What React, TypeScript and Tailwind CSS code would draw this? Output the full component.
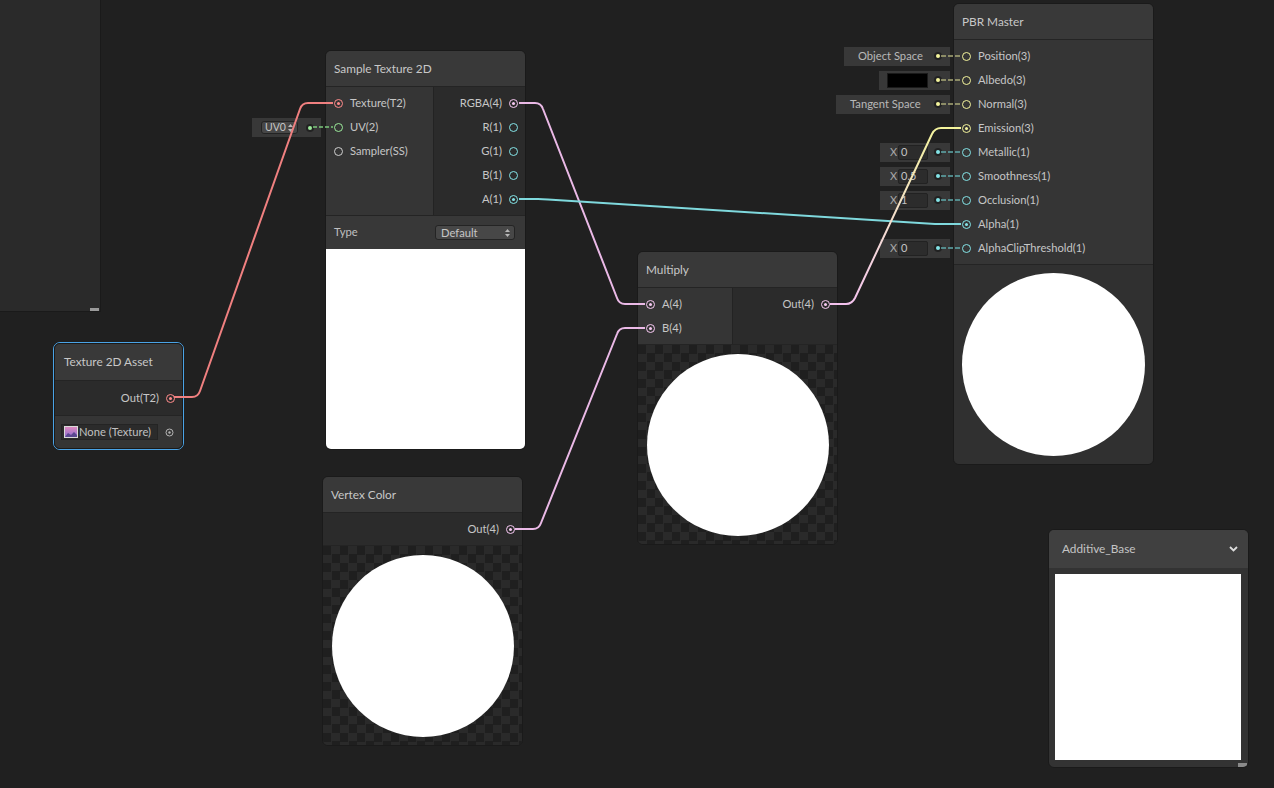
import React from "react";

type PortKind = "tex" | "uv" | "ss" | "v4" | "v1" | "v3";

const PORT: Record<PortKind, { b: string; f: string }> = {
  tex: { b: "border-[#ff8b8b]", f: "bg-[#ff8b8b]" },
  uv: { b: "border-[#9be99a]", f: "bg-[#9be99a]" },
  ss: { b: "border-[#cfcfcf]", f: "bg-[#cfcfcf]" },
  v4: { b: "border-[#f7c8f2]", f: "bg-[#f7c8f2]" },
  v1: { b: "border-[#84e4e7]", f: "bg-[#84e4e7]" },
  v3: { b: "border-[#f4f49c]", f: "bg-[#f4f49c]" },
};

function Port({ kind, filled }: { kind: PortKind; filled?: boolean }) {
  const p = PORT[kind];
  return (
    <span
      className={`flex h-[9px] w-[9px] shrink-0 items-center justify-center rounded-full border-[1.5px] ${p.b}`}
    >
      {filled && <span className={`h-[3px] w-[3px] rounded-full ${p.f}`} />}
    </span>
  );
}

function InRow({ kind, label, filled }: { kind: PortKind; label: string; filled?: boolean }) {
  return (
    <div className="flex h-[24px] items-center gap-[7px] pl-[8px]">
      <Port kind={kind} filled={filled} />
      <span className="text-[11.2px] text-[#c6c6c6]">{label}</span>
    </div>
  );
}

function OutRow({ kind, label, filled }: { kind: PortKind; label: string; filled?: boolean }) {
  return (
    <div className="flex h-[24px] items-center justify-end gap-[7px] pr-[7px]">
      <span className="text-[11.2px] text-[#c6c6c6]">{label}</span>
      <Port kind={kind} filled={filled} />
    </div>
  );
}

function Header({ title }: { title: string }) {
  return (
    <div className="flex h-[36px] shrink-0 items-center border-b border-[#242424] bg-[#393939] px-[8px] text-[11.8px] text-[#c8c8c8]">
      {title}
    </div>
  );
}

function CheckerPreview() {
  return (
    <div className="flex h-[200px] shrink-0 items-center justify-center border-t border-[#242424] bg-[repeating-conic-gradient(#2a2a2a_0_25%,#1f1f1f_0_50%)] bg-[length:17px_17px]">
      <div className="h-[182px] w-[182px] rounded-full bg-white" />
    </div>
  );
}

function UpDown() {
  return (
    <svg width="5" height="8" viewBox="0 0 5 8" className="shrink-0">
      <polygon points="2.5,0 5,3 0,3" fill="#b8b8b8" />
      <polygon points="0,5 5,5 2.5,8" fill="#b8b8b8" />
    </svg>
  );
}

function FieldDot({ color }: { color: string }) {
  return (
    <span className="flex h-[8px] w-[8px] shrink-0 items-center justify-center rounded-full bg-[#222222]">
      <span className={`h-[4px] w-[4px] rounded-full ${color}`} />
    </span>
  );
}

function XField({ value }: { value: string }) {
  return (
    <div className="flex h-[19px] w-[70px] items-center bg-[#383838] pl-[10px] pr-[8px]">
      <span className="w-[8px] text-[11px] text-[#a8a8a8]">X</span>
      <span className="flex h-[15px] w-[30px] items-center rounded-[2px] border border-[#222222] bg-[#2c2c2c] pl-[2px] text-[11px] text-[#c4c4c4]">
        {value}
      </span>
      <span className="flex-1" />
      <FieldDot color="bg-[#84e4e7]" />
    </div>
  );
}

function TextField({ label, w }: { label: string; w: string }) {
  return (
    <div className={`flex h-[19px] items-center justify-between bg-[#383838] pl-[14px] pr-[8px] ${w}`}>
      <span className="text-[11.2px] text-[#b8b8b8]">{label}</span>
      <FieldDot color="bg-[#f4f49c]" />
    </div>
  );
}

function TexIcon() {
  return (
    <svg width="14" height="12" viewBox="0 0 14 12" className="shrink-0">
      <defs>
        <linearGradient id="tg" x1="0" y1="0" x2="0" y2="1">
          <stop offset="0" stopColor="#e08bbf" />
          <stop offset="1" stopColor="#8a6bd0" />
        </linearGradient>
      </defs>
      <rect x="0.5" y="0.5" width="13" height="11" fill="url(#tg)" stroke="#d9d9d9" strokeWidth="1" />
      <polygon points="1,11 4,7 7,9 10,6 13,9 13,11" fill="#5a4790" />
    </svg>
  );
}

export default function App() {
  return (
    <div className="relative h-[788px] w-[1274px] overflow-hidden bg-[#202020] font-['Lato','Noto_Sans',sans-serif]">
      {/* Left docked panel */}
      <div className="absolute left-0 top-0 h-[312px] w-[101px] border-b border-r border-[#1a1a1a] bg-[#2a2a2a]">
        <div className="absolute bottom-[0px] right-[1px] h-[3px] w-[9px] bg-[#9a9a9a]" />
      </div>

      {/* UV0 default field */}
      <div className="absolute left-[252px] top-[118px] flex h-[19px] w-[69px] items-center bg-[#383838] pl-[9px] pr-[7px]">
        <span className="flex h-[13px] w-[37px] items-center justify-between rounded-[3px] border border-[#232323] bg-[#474747] pl-[3px] pr-[4px] text-[10.5px] leading-none text-[#c6c6c6]">
          UV0
          <UpDown />
        </span>
        <span className="flex-1" />
        <FieldDot color="bg-[#9be99a]" />
      </div>

      {/* PBR Master default input fields */}
      <div className="absolute left-[780px] top-[44px] flex w-[170px] flex-col items-end">
        <div className="flex h-[24px] items-center">
          <TextField label="Object Space" w="w-[106px]" />
        </div>
        <div className="flex h-[24px] items-center">
          <div className="flex h-[19px] w-[71px] items-center bg-[#383838] pl-[8px] pr-[8px]">
            <span className="h-[15px] w-[41px] border border-[#1a1a1a] bg-black" />
            <span className="flex-1" />
            <FieldDot color="bg-[#f4f49c]" />
          </div>
        </div>
        <div className="flex h-[24px] items-center">
          <TextField label="Tangent Space" w="w-[114px]" />
        </div>
        <div className="h-[24px]" />
        <div className="flex h-[24px] items-center">
          <XField value="0" />
        </div>
        <div className="flex h-[24px] items-center">
          <XField value="0.5" />
        </div>
        <div className="flex h-[24px] items-center">
          <XField value="1" />
        </div>
        <div className="h-[24px]" />
        <div className="flex h-[24px] items-center">
          <XField value="0" />
        </div>
      </div>

      {/* Texture 2D Asset (selected) */}
      <div className="absolute left-[53px] top-[342px] w-[131px] rounded-[7px] border border-[#4aa3e6]">
        <div className="flex flex-col overflow-hidden rounded-[6px] border border-[#1a1a1a] bg-[#2b2b2b]">
          <div className="flex h-[37px] items-center border-b border-[#242424] bg-[#393939] px-[9px] text-[11.8px] text-[#c8c8c8]">
            Texture 2D Asset
          </div>
          <div className="py-[5px]">
            <OutRow kind="tex" label="Out(T2)" filled />
          </div>
          <div className="flex h-[33px] items-center border-t border-[#242424] bg-[#353535] pl-[6px] pr-[8px]">
            <div className="flex h-[16px] w-[97px] items-center gap-[1px] border border-[#242424] bg-[#2b2b2b] pl-[2px] text-[11.2px] text-[#c0c0c0]">
              <TexIcon />
              None (Texture)
            </div>
            <span className="flex-1" />
            <svg width="9" height="9" viewBox="0 0 9 9">
              <circle cx="4.5" cy="4.5" r="3.5" fill="none" stroke="#b4b4b4" strokeWidth="1" />
              <circle cx="4.5" cy="4.5" r="1.2" fill="#b4b4b4" />
            </svg>
          </div>
        </div>
      </div>

      {/* Sample Texture 2D */}
      <div className="absolute left-[325px] top-[50px] flex w-[201px] flex-col overflow-hidden rounded-[6px] border border-[#1a1a1a] bg-[#2b2b2b]">
        <Header title="Sample Texture 2D" />
        <div className="flex">
          <div className="w-[108px] border-r border-[#232323] bg-[#353535] pb-[4px] pt-[4px]">
            <InRow kind="tex" label="Texture(T2)" filled />
            <InRow kind="uv" label="UV(2)" />
            <InRow kind="ss" label="Sampler(SS)" />
          </div>
          <div className="flex-1 pb-[4px] pt-[4px]">
            <OutRow kind="v4" label="RGBA(4)" filled />
            <OutRow kind="v1" label="R(1)" />
            <OutRow kind="v1" label="G(1)" />
            <OutRow kind="v1" label="B(1)" />
            <OutRow kind="v1" label="A(1)" filled />
          </div>
        </div>
        <div className="flex h-[34px] items-center justify-between border-t border-[#242424] bg-[#383838] pl-[8px] pr-[10px]">
          <span className="text-[11.2px] text-[#c0c0c0]">Type</span>
          <span className="flex h-[15px] w-[80px] items-center justify-between rounded-[3px] border border-[#242424] bg-[#474747] pl-[5px] pr-[4px] text-[11.2px] leading-none text-[#c6c6c6]">
            Default
            <UpDown />
          </span>
        </div>
        <div className="h-[200px] bg-white" />
      </div>

      {/* Vertex Color */}
      <div className="absolute left-[322px] top-[476px] flex w-[201px] flex-col overflow-hidden rounded-[6px] border border-[#1a1a1a] bg-[#2b2b2b]">
        <Header title="Vertex Color" />
        <div className="pb-[4px] pt-[4px]">
          <OutRow kind="v4" label="Out(4)" filled />
        </div>
        <CheckerPreview />
      </div>

      {/* Multiply */}
      <div className="absolute left-[637px] top-[251px] flex w-[201px] flex-col overflow-hidden rounded-[6px] border border-[#1a1a1a] bg-[#2b2b2b]">
        <Header title="Multiply" />
        <div className="flex">
          <div className="w-[95px] border-r border-[#232323] bg-[#353535] pb-[4px] pt-[4px]">
            <InRow kind="v4" label="A(4)" filled />
            <InRow kind="v4" label="B(4)" filled />
          </div>
          <div className="flex-1 pb-[4px] pt-[4px]">
            <OutRow kind="v4" label="Out(4)" filled />
          </div>
        </div>
        <CheckerPreview />
      </div>

      {/* PBR Master */}
      <div className="absolute left-[953px] top-[3px] flex w-[201px] flex-col overflow-hidden rounded-[6px] border border-[#1a1a1a] bg-[#2b2b2b]">
        <Header title="PBR Master" />
        <div className="bg-[#353535] pb-[4px] pt-[4px]">
          <InRow kind="v3" label="Position(3)" />
          <InRow kind="v3" label="Albedo(3)" />
          <InRow kind="v3" label="Normal(3)" />
          <InRow kind="v3" label="Emission(3)" filled />
          <InRow kind="v1" label="Metallic(1)" />
          <InRow kind="v1" label="Smoothness(1)" />
          <InRow kind="v1" label="Occlusion(1)" />
          <InRow kind="v1" label="Alpha(1)" filled />
          <InRow kind="v1" label="AlphaClipThreshold(1)" />
        </div>
        <div className="flex h-[200px] items-center justify-center border-t border-[#242424] bg-[#303030]">
          <div className="h-[183px] w-[183px] rounded-full bg-white" />
        </div>
      </div>

      {/* Additive_Base preview window */}
      <div className="absolute left-[1048px] top-[529px] flex h-[239px] w-[201px] flex-col overflow-hidden rounded-[6px] border border-[#1a1a1a] bg-[#333333]">
        <div className="flex h-[38px] shrink-0 items-center justify-between bg-[#404040] pl-[13px] pr-[10px] text-[11.8px] text-[#c4c4c4]">
          Additive_Base
          <svg width="9" height="6" viewBox="0 0 9 6">
            <polyline points="1,1 4.5,4.5 8,1" fill="none" stroke="#dcdcdc" strokeWidth="1.8" />
          </svg>
        </div>
        <div className="flex-1 p-[6px] pb-[6px]">
          <div className="h-[186px] w-[186px] bg-white" />
        </div>
        <div className="absolute bottom-[0px] right-[1px] h-[4px] w-[9px] bg-[#8a8a8a]" />
      </div>

      {/* Wires */}
      <svg className="pointer-events-none absolute left-0 top-0" width="1274" height="788">
        <defs>
          <linearGradient id="emi" gradientUnits="userSpaceOnUse" x1="846" y1="304" x2="941" y2="128">
            <stop offset="0" stopColor="#f4c2ee" />
            <stop offset="0.35" stopColor="#f4d8d8" />
            <stop offset="1" stopColor="#f4f49c" />
          </linearGradient>
        </defs>
        <path d="M 174 397 L 192 397 Q 198 397 200 391 L 300 109 Q 302 103 308 103 L 333 103" fill="none" stroke="#f08080" strokeWidth="2" />
        <path d="M 519 103 L 535 103 Q 541 103 543 109 L 617 298 Q 619 304 625 304 L 645 304" fill="none" stroke="#eab9e6" strokeWidth="2" />
        <path d="M 515 529 L 533 529 Q 539 529 541 523 L 617 334 Q 619 328 625 328 L 645 328" fill="none" stroke="#eab9e6" strokeWidth="2" />
        <path d="M 519 199 L 538 199 Q 542 199 548 199.5 L 935 224 L 961 224" fill="none" stroke="#7fd9dd" strokeWidth="2" />
        <path d="M 830 304 L 846 304 Q 852 304 855 298 L 932 134 Q 935 128 941 128 L 961 128" fill="none" stroke="url(#emi)" strokeWidth="2" />
        <line x1="313" y1="127" x2="333" y2="127" stroke="#7cc97c" strokeWidth="1.5" strokeDasharray="4 2" />
        {[56, 80, 104].map((y) => (
          <line key={y} x1="941" y1={y} x2="961" y2={y} stroke="#a9a977" strokeWidth="1.5" strokeDasharray="5 2" />
        ))}
        {[152, 176, 200, 248].map((y) => (
          <line key={y} x1="941" y1={y} x2="961" y2={y} stroke="#5fa9ab" strokeWidth="1.5" strokeDasharray="5 2" />
        ))}
      </svg>
    </div>
  );
}
